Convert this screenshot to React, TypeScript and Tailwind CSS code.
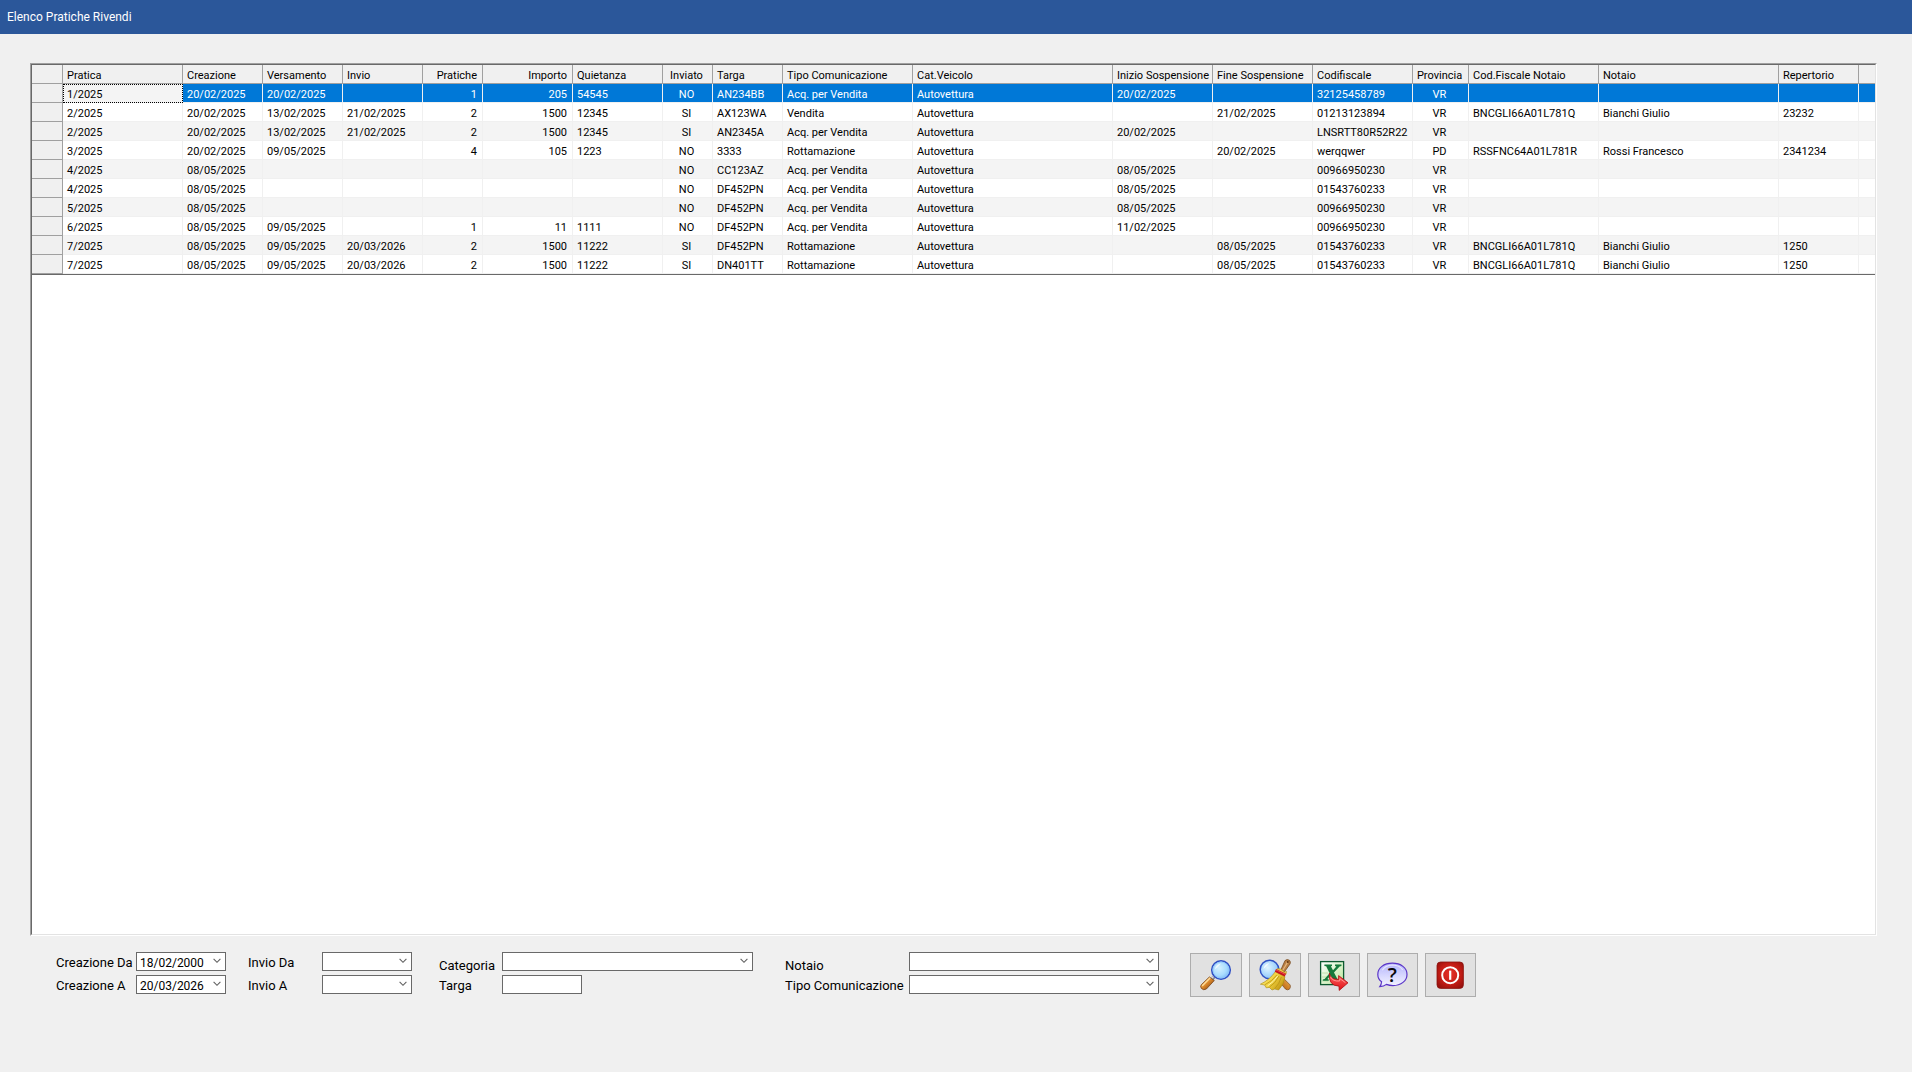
import React from "react";

type Align = "left" | "center" | "right";

const columns: { title: string; width: string; align?: Align }[] = [
  { title: "Pratica", width: "w-[120px]" },
  { title: "Creazione", width: "w-[80px]" },
  { title: "Versamento", width: "w-[80px]" },
  { title: "Invio", width: "w-[80px]" },
  { title: "Pratiche", width: "w-[60px]", align: "right" },
  { title: "Importo", width: "w-[90px]", align: "right" },
  { title: "Quietanza", width: "w-[90px]" },
  { title: "Inviato", width: "w-[50px]", align: "center" },
  { title: "Targa", width: "w-[70px]" },
  { title: "Tipo Comunicazione", width: "w-[130px]" },
  { title: "Cat.Veicolo", width: "w-[200px]" },
  { title: "Inizio Sospensione", width: "w-[100px]" },
  { title: "Fine Sospensione", width: "w-[100px]" },
  { title: "Codifiscale", width: "w-[100px]" },
  { title: "Provincia", width: "w-[56px]", align: "center" },
  { title: "Cod.Fiscale Notaio", width: "w-[130px]" },
  { title: "Notaio", width: "w-[180px]" },
  { title: "Repertorio", width: "w-[80px]" },
];

const rows: string[][] = [
  ["1/2025", "20/02/2025", "20/02/2025", "", "1", "205", "54545", "NO", "AN234BB", "Acq. per Vendita", "Autovettura", "20/02/2025", "", "32125458789", "VR", "", "", ""],
  ["2/2025", "20/02/2025", "13/02/2025", "21/02/2025", "2", "1500", "12345", "SI", "AX123WA", "Vendita", "Autovettura", "", "21/02/2025", "01213123894", "VR", "BNCGLI66A01L781Q", "Bianchi Giulio", "23232"],
  ["2/2025", "20/02/2025", "13/02/2025", "21/02/2025", "2", "1500", "12345", "SI", "AN2345A", "Acq. per Vendita", "Autovettura", "20/02/2025", "", "LNSRTT80R52R22", "VR", "", "", ""],
  ["3/2025", "20/02/2025", "09/05/2025", "", "4", "105", "1223", "NO", "3333", "Rottamazione", "Autovettura", "", "20/02/2025", "werqqwer", "PD", "RSSFNC64A01L781R", "Rossi Francesco", "2341234"],
  ["4/2025", "08/05/2025", "", "", "", "", "", "NO", "CC123AZ", "Acq. per Vendita", "Autovettura", "08/05/2025", "", "00966950230", "VR", "", "", ""],
  ["4/2025", "08/05/2025", "", "", "", "", "", "NO", "DF452PN", "Acq. per Vendita", "Autovettura", "08/05/2025", "", "01543760233", "VR", "", "", ""],
  ["5/2025", "08/05/2025", "", "", "", "", "", "NO", "DF452PN", "Acq. per Vendita", "Autovettura", "08/05/2025", "", "00966950230", "VR", "", "", ""],
  ["6/2025", "08/05/2025", "09/05/2025", "", "1", "11", "1111", "NO", "DF452PN", "Acq. per Vendita", "Autovettura", "11/02/2025", "", "00966950230", "VR", "", "", ""],
  ["7/2025", "08/05/2025", "09/05/2025", "20/03/2026", "2", "1500", "11222", "SI", "DF452PN", "Rottamazione", "Autovettura", "", "08/05/2025", "01543760233", "VR", "BNCGLI66A01L781Q", "Bianchi Giulio", "1250"],
  ["7/2025", "08/05/2025", "09/05/2025", "20/03/2026", "2", "1500", "11222", "SI", "DN401TT", "Rottamazione", "Autovettura", "", "08/05/2025", "01543760233", "VR", "BNCGLI66A01L781Q", "Bianchi Giulio", "1250"],
];

const alignClass: Record<Align, string> = {
  left: "text-left px-1",
  center: "text-center pl-0 pr-[2px]",
  right: "text-right pl-1 pr-[5px]",
};

const cellBase = "h-[19px] overflow-hidden whitespace-nowrap pt-1 pb-0 leading-[14px] font-normal";

function PraticheTable() {
  return (
    <table className="w-full table-fixed border-separate border-spacing-0 border-b border-[#696969] text-[11px] text-black">
      <colgroup>
        <col className="w-[31px]" />
        {columns.map((c) => (
          <col key={c.title} className={c.width} />
        ))}
        <col />
      </colgroup>
      <thead>
        <tr className="bg-[#f0f0f0]">
          <td className="border-r border-b border-[#a0a0a0]" />
          {columns.map((c) => (
            <th key={c.title} scope="col" className={`${cellBase} border-r border-b border-[#a0a0a0] ${alignClass[c.align ?? "left"]}`}>
              {c.title}
            </th>
          ))}
          <td className="border-b border-[#a0a0a0]" />
        </tr>
      </thead>
      <tbody>
        {rows.map((row, r) => {
          const selected = r === 0;
          const stripe = r % 2 === 0 ? "bg-[#f4f4f4]" : "bg-white";
          return (
            <tr key={r} className={selected ? "bg-[#0078d7] text-white" : stripe}>
              <td className="h-[19px] border-r border-b border-[#a0a0a0] bg-[#f0f0f0]" />
              {row.map((value, i) => (
                <td
                  key={i}
                  className={`${cellBase} border-r border-b border-[#f0f0f0] ${alignClass[columns[i].align ?? "left"]} ${
                    selected && i === 0 ? "bg-[#f4f4f4] text-black outline-1 -outline-offset-1 outline-dotted outline-black" : ""
                  }`}
                >
                  {value}
                </td>
              ))}
              <td className="border-b border-[#f0f0f0]" />
            </tr>
          );
        })}
      </tbody>
    </table>
  );
}

function Combo({ id, value }: { id: string; value?: string }) {
  return (
    <div className="relative h-[19px]">
      <select
        id={id}
        defaultValue={value ?? ""}
        className="block h-full w-full appearance-none rounded-none border border-[#696969] bg-white pt-[2px] pr-5 pl-[3px] text-[12px] leading-4 text-black"
      >
        <option value={value ?? ""}>{value ?? ""}</option>
      </select>
      <svg viewBox="0 0 8 6" className="pointer-events-none absolute top-[6px] right-[5px] h-[6px] w-2" fill="none" stroke="#606060" strokeWidth="1.1">
        <path d="M0.6 0.8 L4 4.3 L7.4 0.8" />
      </svg>
    </div>
  );
}

function Label({ htmlFor, low, children }: { htmlFor: string; low?: boolean; children: string }) {
  return (
    <label htmlFor={htmlFor} className={`text-[13px] leading-[19px] whitespace-nowrap ${low ? "pt-1" : "pt-px"}`}>
      {children}
    </label>
  );
}

function SearchIcon() {
  return (
    <svg viewBox="0 0 32 32" className="h-8 w-8">
      <defs>
        <linearGradient id="s-handle" x1="0" y1="0" x2="1" y2="1">
          <stop offset="0.2" stopColor="#f0b860" />
          <stop offset="0.5" stopColor="#d9862a" />
          <stop offset="0.9" stopColor="#7a3c0c" />
        </linearGradient>
        <radialGradient id="s-lens" cx="0.4" cy="0.4" r="0.65">
          <stop offset="0" stopColor="#d5f1ff" />
          <stop offset="0.6" stopColor="#a9dcff" />
          <stop offset="1" stopColor="#7ab8f5" />
        </radialGradient>
      </defs>
      <path d="M10.5 21.5 L15 17" stroke="#8c8c94" strokeWidth="3.4" />
      <path d="M10.5 20.5 L14 17" stroke="#dcdce4" strokeWidth="1.2" />
      <path d="M9.4 17.9 L14.3 21.5 L6.4 30 Q3.6 31.8 1.4 29.4 Q-0.2 27.4 1.4 25.6 Z" fill="url(#s-handle)" stroke="#6d3a10" strokeWidth="0.7" />
      <path d="M9.8 19.2 L2.6 26.6" stroke="#ffdc9a" strokeWidth="1.4" strokeLinecap="round" />
      <circle cx="21" cy="11" r="9.3" fill="url(#s-lens)" stroke="#2f4fc4" strokeWidth="1.5" />
      <circle cx="21" cy="11" r="8" fill="none" stroke="#8fc4fa" strokeWidth="0.8" />
      <path d="M14.8 10.4 Q15.6 5.2 21 4.4 Q18.4 8 14.8 10.4 Z" fill="#ffffff" opacity="0.7" />
    </svg>
  );
}

function ClearIcon() {
  return (
    <svg viewBox="0 0 32 32" className="h-8 w-8">
      <defs>
        <linearGradient id="c-handle" x1="1" y1="0" x2="0" y2="1">
          <stop offset="0" stopColor="#f3b95e" />
          <stop offset="0.6" stopColor="#c97820" />
          <stop offset="1" stopColor="#74390b" />
        </linearGradient>
        <linearGradient id="c-brush" x1="0" y1="0" x2="1" y2="0.6">
          <stop offset="0" stopColor="#fff08a" />
          <stop offset="0.55" stopColor="#f2d340" />
          <stop offset="1" stopColor="#c59a15" />
        </linearGradient>
        <radialGradient id="c-lens" cx="0.4" cy="0.4" r="0.65">
          <stop offset="0" stopColor="#e2f6ff" />
          <stop offset="1" stopColor="#86c4fb" />
        </radialGradient>
      </defs>
      <path d="M19 21 L23 17.8 L31.2 26 Q32 28.4 30.4 30.2 Q28.4 31.6 26.4 30 Z" fill="url(#c-handle)" stroke="#6d3a10" strokeWidth="0.6" />
      <circle cx="10.5" cy="10.5" r="9.3" fill="url(#c-lens)" stroke="#2f52c4" strokeWidth="1.5" />
      <path d="M4.4 10 Q5.2 4.8 10.4 4 Q8 7.6 4.4 10 Z" fill="#ffffff" opacity="0.75" />
      <path d="M21.6 11.4 L26 1.6 Q28 -0.2 30.4 1.2 Q32 2.8 31 5 L25 13.4 Z" fill="#b98045" stroke="#6d3f14" strokeWidth="0.7" />
      <path d="M24 11 L28.4 3.4" stroke="#e3b780" strokeWidth="1.2" />
      <circle cx="28.8" cy="3" r="0.9" fill="#5d3510" />
      <path d="M18.2 9.6 Q21.6 9 25.4 13 L27.6 12.4 L27 15.4 L17.4 11.4 Z" fill="#ead04a" stroke="#a58218" strokeWidth="0.5" />
      <path d="M16.4 12.6 L26 17.6 Q25.4 25 19.6 31 L15.8 30 L13 31 L10.4 28.4 L7.2 28.8 L5.6 26 L1.4 25.2 Q10.6 21 16.4 12.6 Z" fill="url(#c-brush)" stroke="#a78a14" strokeWidth="0.6" />
      <path d="M17.8 16 Q13 22.4 5.8 25.8 M20 17 Q16.4 24.4 10.6 28 M22.4 18 Q20.4 25 15.8 29.6" fill="none" stroke="#b89414" strokeWidth="0.8" />
      <path d="M18.8 16.8 Q14.4 23.4 8.6 26.8" fill="none" stroke="#fffbc4" strokeWidth="0.9" />
      <path d="M16.4 11.4 L26.4 16.2" stroke="#c8141c" strokeWidth="3" />
      <path d="M17 10.9 L26.4 15.4" stroke="#f05a5a" strokeWidth="0.8" />
    </svg>
  );
}

function ExcelIcon() {
  return (
    <svg viewBox="0 0 32 32" className="h-8 w-8">
      <defs>
        <linearGradient id="x-paper" x1="0" y1="0" x2="1" y2="1">
          <stop offset="0" stopColor="#ffffff" />
          <stop offset="1" stopColor="#b9e89c" />
        </linearGradient>
        <linearGradient id="x-arrow" x1="0" y1="0" x2="0" y2="1">
          <stop offset="0" stopColor="#ff6a66" />
          <stop offset="1" stopColor="#e01218" />
        </linearGradient>
      </defs>
      <rect x="2.6" y="2.6" width="23" height="23" fill="url(#x-paper)" stroke="#0d5a30" strokeWidth="1.3" />
      <path d="M4 14 H10 M4 18 H9 M4 22 H10 M18 6 H24" stroke="#b5dda2" strokeWidth="0.8" />
      <path d="M6.4 5.6 H14 V7 L12.9 7.2 L15 11.2 L18.4 7.4 L17 7 V5.6 H23.4 V7 L21.6 7.4 L16 13.4 L19.4 20 L21 20.4 V21.8 H13.4 V20.4 L14.6 20 L12.6 16.4 L9.4 20 L10.8 20.4 V21.8 H4.8 V20.4 L6.6 20 L11.6 14.2 L8.2 7.2 L6.4 7 Z" fill="#167a3c" />
      <path d="M11.4 14 Q12.4 20.6 20.6 20.4 L20.6 16.6 L30 23.8 L21.2 31.4 L21 27.2 Q10 26.6 11.4 14 Z" fill="url(#x-arrow)" stroke="#b00d12" strokeWidth="0.8" strokeLinejoin="round" />
      <path d="M12.6 18 Q14.8 22.6 21.6 22 L21.8 19.6 L27.4 23.6" fill="none" stroke="#ff9c98" strokeWidth="0.9" />
    </svg>
  );
}

function HelpIcon() {
  return (
    <svg viewBox="0 0 32 32" className="h-8 w-8">
      <defs>
        <linearGradient id="h-bubble" x1="0" y1="0" x2="0" y2="1">
          <stop offset="0" stopColor="#b4b4fb" />
          <stop offset="0.6" stopColor="#dcdcff" />
          <stop offset="1" stopColor="#f4f4ff" />
        </linearGradient>
      </defs>
      <path d="M15.4 4.2 C24 4.2 30 9 30 15.4 C30 21.8 24 26.6 16 26.6 C13.4 26.6 11.4 26.2 9.4 25.4 Q6.8 27.6 2.8 27.6 Q4.4 25.6 4.6 22.8 C2 20.8 0.8 18.4 0.8 15.4 C0.8 9 6.8 4.2 15.4 4.2 Z" fill="url(#h-bubble)" stroke="#5a35c8" strokeWidth="1.2" />
      <path d="M5.4 11.2 Q8 6.4 15.4 6 Q23 6.4 25.8 11" fill="none" stroke="#e8e8ff" strokeWidth="1.2" />
      <text x="15.2" y="23" textAnchor="middle" fontFamily="Open Sans, sans-serif" fontSize="20" fontWeight="600" fill="#0a0a0a">
        ?
      </text>
    </svg>
  );
}

function ExitIcon() {
  return (
    <svg viewBox="0 0 32 32" className="h-8 w-8">
      <defs>
        <radialGradient id="e-red" cx="0.5" cy="0.45" r="0.7">
          <stop offset="0" stopColor="#e8322a" />
          <stop offset="0.6" stopColor="#bf1b14" />
          <stop offset="1" stopColor="#8c0f0b" />
        </radialGradient>
      </defs>
      <rect x="2" y="3" width="26.4" height="26.4" rx="3.6" fill="url(#e-red)" stroke="#8a120e" strokeWidth="0.8" />
      <circle cx="15.2" cy="16.2" r="8" fill="none" stroke="#ffffff" strokeWidth="2" />
      <path d="M15.2 11.6 V20.8" stroke="#ffffff" strokeWidth="2.2" />
    </svg>
  );
}

const actions = [
  { label: "Cerca", width: "w-[52px]", icon: <SearchIcon /> },
  { label: "Pulisci filtri", width: "w-[52px]", icon: <ClearIcon /> },
  { label: "Esporta in Excel", width: "w-[52px]", icon: <ExcelIcon /> },
  { label: "Aiuto", width: "w-[51px]", icon: <HelpIcon /> },
  { label: "Esci", width: "w-[51px]", icon: <ExitIcon /> },
];

const filterGrid = "grid grid-rows-[19px_19px] gap-y-1";

export default function App() {
  return (
    <div className="flex min-h-screen flex-col bg-[#f0f0f0] font-['Roboto','Liberation_Sans',Arial,sans-serif] text-black">
      <header className="flex h-[34px] items-center bg-[#2b579a] px-[7px]">
        <h1 className="text-xs text-white">Elenco Pratiche Rivendi</h1>
      </header>

      <main className="flex flex-1 flex-col pt-[29px] pr-[35px] pb-[75px] pl-[30px]">
        {/* sunken 3D frame around the grid */}
        <div className="flex flex-1 border border-t-[#a0a0a0] border-r-white border-b-white border-l-[#a0a0a0]">
          <div className="min-w-0 flex-1 overflow-hidden border border-t-[#696969] border-r-[#e3e3e3] border-b-[#e3e3e3] border-l-[#696969] bg-white">
            <PraticheTable />
          </div>
        </div>

        <form className="flex items-start pt-4 pl-[26px]" onSubmit={(e) => e.preventDefault()}>
          <div className={`${filterGrid} mr-[22px] grid-cols-[80px_90px]`}>
            <Label htmlFor="creazione-da">Creazione Da</Label>
            <Combo id="creazione-da" value="18/02/2000" />
            <Label htmlFor="creazione-a">Creazione A</Label>
            <Combo id="creazione-a" value="20/03/2026" />
          </div>
          <div className={`${filterGrid} mr-[27px] grid-cols-[74px_90px]`}>
            <Label htmlFor="invio-da">Invio Da</Label>
            <Combo id="invio-da" />
            <Label htmlFor="invio-a">Invio A</Label>
            <Combo id="invio-a" />
          </div>
          <div className={`${filterGrid} mr-8 grid-cols-[63px_251px]`}>
            <Label htmlFor="categoria" low>Categoria</Label>
            <Combo id="categoria" />
            <Label htmlFor="targa">Targa</Label>
            <input id="targa" type="text" className="h-[19px] w-20 border border-[#696969] bg-white px-[3px] text-[12px]" />
          </div>
          <div className={`${filterGrid} mr-[31px] grid-cols-[124px_250px]`}>
            <Label htmlFor="notaio" low>Notaio</Label>
            <Combo id="notaio" />
            <Label htmlFor="tipo">Tipo Comunicazione</Label>
            <Combo id="tipo" />
          </div>
          <div className="flex gap-[7px] pt-px">
            {actions.map((a) => (
              <button key={a.label} type="button" aria-label={a.label} className={`flex h-11 items-center justify-center border border-[#adadad] bg-[#e1e1e1] ${a.width}`}>
                {a.icon}
              </button>
            ))}
          </div>
        </form>
      </main>
    </div>
  );
}
